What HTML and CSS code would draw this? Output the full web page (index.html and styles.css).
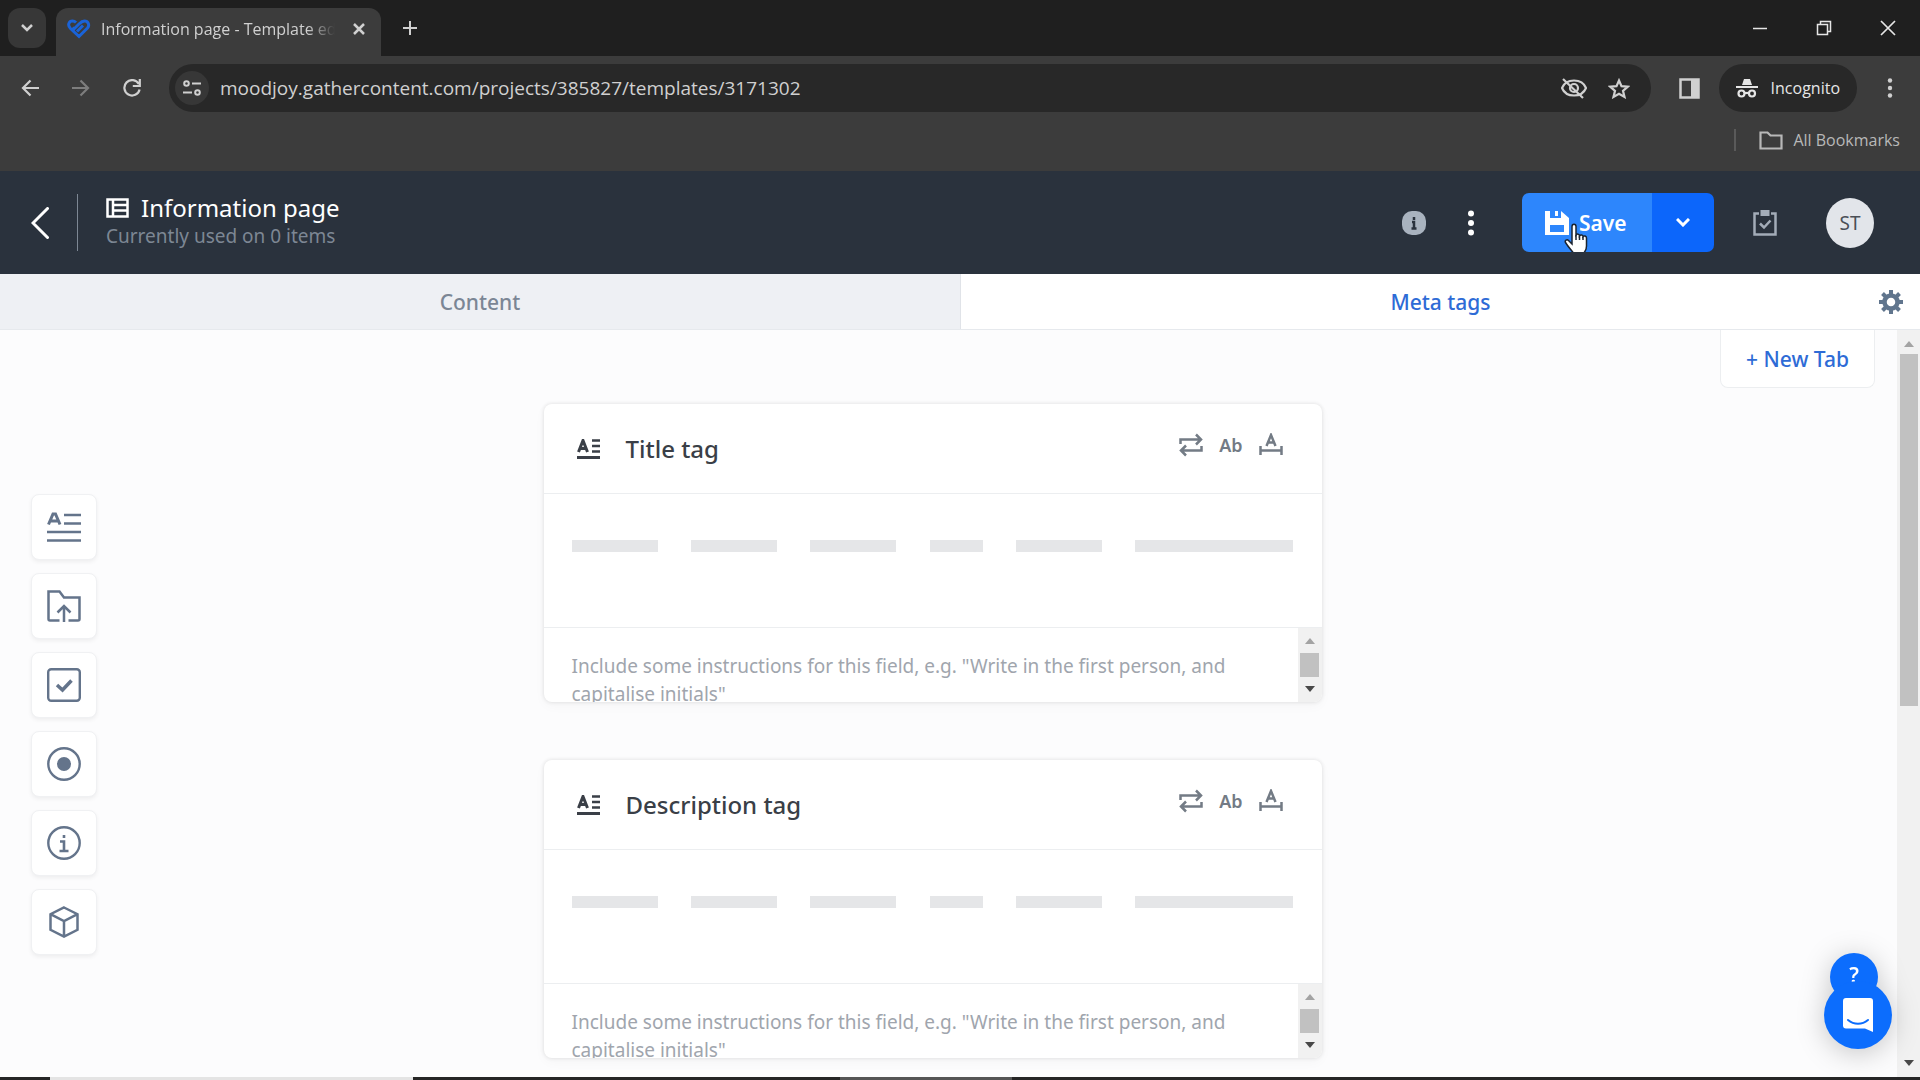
FILE: index.html
```html
<!DOCTYPE html>
<html lang="en">
<head>
<meta charset="utf-8">
<title>Information page - Template editor</title>
<link rel="stylesheet" href="styles.css">
</head>
<body>
<svg class="defs" aria-hidden="true">
  <symbol id="i-text" viewBox="0 0 23 20"><path d="M0 18.500h23" stroke="currentColor" stroke-width="3"/><path d="M15 1.500h8M15 7h8M15 12.500h8" stroke="currentColor" stroke-width="2.500"/><path d="M1.500 13L6 1.500L10.500 13M3 9.500h6" fill="none" stroke="currentColor" stroke-width="3"/></symbol>
  <symbol id="i-swap" viewBox="0 0 24 24"><path d="M1.500 11V6.500H22M17 1.500l5 5-5 5M22.500 13v4.500H2M7 12.500l-5 5 5 5" fill="none" stroke="currentColor" stroke-width="2.500"/></symbol>
  <symbol id="i-limit" viewBox="0 0 24 24"><path d="M1.500 13v9M22.500 13v9M1.500 17.500h21M7.500 13L12 2l4.500 11M9 9.500h6" fill="none" stroke="currentColor" stroke-width="2.500"/></symbol>
  <symbol id="i-up" viewBox="0 0 10 6"><path d="M0 6L5 0l5 6z" fill="currentColor"/></symbol>
  <symbol id="i-down" viewBox="0 0 10 6"><path d="M0 0h10L5 6z" fill="currentColor"/></symbol>
</svg>

<div class="browser">
  <div class="tabstrip">
    <button class="tab-search" aria-label="Search tabs"><svg width="12" height="8" viewBox="0 0 12 8"><path d="M1 1l5 5 5-5" fill="none" stroke="currentColor" stroke-width="2.500"/></svg></button>
    <div class="browser-tab">
      <svg class="favicon" width="24" height="20" viewBox="0 0 24 20"><path d="M10 12.500l6-6M5.500 8.500l1.500 1.500 5-5c2-2 3.500-3 5.500-3 3.500 0 5.500 4 3 7l-8.500 8.500L3.500 9.500C0 6 2 2 5.500 2c1.500 0 2.500.500 3.500 1.500" fill="none" stroke="currentColor" stroke-width="3"/></svg>
      <span class="tab-title">Information page - Template editor</span>
      <button class="plain" aria-label="Close tab"><svg width="12" height="12" viewBox="0 0 12 12"><path d="M1 1l10 10M11 1L1 11" stroke="currentColor" stroke-width="2.500"/></svg></button>
    </div>
    <button class="plain new-browser-tab" aria-label="New tab"><svg width="16" height="16" viewBox="0 0 16 16"><path d="M8 1v14M1 8h14" stroke="currentColor" stroke-width="2"/></svg></button>
    <div class="window-buttons">
      <button class="plain" aria-label="Minimize"><svg width="16" height="16" viewBox="0 0 16 16"><path d="M1 8.500h14" stroke="currentColor" stroke-width="1.500"/></svg></button>
      <button class="plain" aria-label="Restore"><svg width="16" height="16" viewBox="0 0 16 16"><path d="M1.500 4.500h10v10h-10zM4.500 4V1.500h10v10H12" fill="none" stroke="currentColor" stroke-width="1.500"/></svg></button>
      <button class="plain" aria-label="Close"><svg width="16" height="16" viewBox="0 0 16 16"><path d="M1 1l14 14M15 1L1 15" stroke="currentColor" stroke-width="1.700"/></svg></button>
    </div>
  </div>
  <div class="toolbar">
    <div class="nav-buttons">
      <button class="plain" aria-label="Back"><svg width="18" height="18" viewBox="0 0 18 18"><path d="M18 9H2M9.500 1.500L2 9l7.500 7.500" fill="none" stroke="currentColor" stroke-width="2.200"/></svg></button>
      <button class="plain dim" aria-label="Forward"><svg width="18" height="18" viewBox="0 0 18 18"><path d="M0 9h16M8.500 1.500L16 9l-7.500 7.500" fill="none" stroke="currentColor" stroke-width="2.200"/></svg></button>
      <button class="plain" aria-label="Reload"><svg width="18" height="18" viewBox="0 0 18 18"><path d="M15.800 5A7.700 7.700 0 1 0 16.600 10.500M16.800 0v7h-7" fill="none" stroke="currentColor" stroke-width="2.200"/></svg></button>
    </div>
    <div class="address">
      <button class="site-info" aria-label="Site information"><svg width="18" height="16" viewBox="0 0 18 16"><g fill="none" stroke="currentColor" stroke-width="2"><circle cx="3.500" cy="3.500" r="2.300"/><path d="M9 3.500h9M0 12.500h9"/><circle cx="14.500" cy="12.500" r="2.300"/></g></svg></button>
      <input class="url" aria-label="Address" value="moodjoy.gathercontent.com/projects/385827/templates/3171302">
      <button class="plain" aria-label="Tracking protection"><svg width="26" height="22" viewBox="0 0 26 22"><path d="M1 11C5 1 21 1 25 11C21 21 5 21 1 11z" fill="none" stroke="currentColor" stroke-width="2.200"/><circle cx="13" cy="11" r="4" fill="none" stroke="currentColor" stroke-width="2.200"/><path d="M2 2l20 19" stroke="currentColor" stroke-width="2.200"/></svg></button>
      <button class="plain" aria-label="Bookmark this page"><svg width="22" height="21" viewBox="0 0 22 21"><path d="M11 2.500l2.500 5.700 6.200.5-4.700 4.100 1.500 6.100L11 15.700l-5.500 3.200L7 12.800 2.300 8.700l6.200-.5z" fill="none" stroke="currentColor" stroke-width="2.200"/></svg></button>
    </div>
    <button class="plain side-panel" aria-label="Side panel"><svg width="21" height="21" viewBox="0 0 21 21"><path d="M1.500 1.500h18v18h-18z" fill="none" stroke="currentColor" stroke-width="2.500"/><path d="M12 1h8v19h-8z" fill="currentColor"/></svg></button>
    <button class="incognito"><svg width="22" height="20" viewBox="0 0 22 20"><path d="M6 7L8 1h6l2 6z" fill="currentColor"/><path d="M0 9h22" stroke="currentColor" stroke-width="2"/><g fill="none" stroke="currentColor" stroke-width="2.200"><circle cx="5.500" cy="15.500" r="3"/><circle cx="16" cy="15.500" r="3"/><path d="M8.500 15h4.500"/></g></svg>Incognito</button>
    <button class="plain" aria-label="Browser menu"><svg width="6" height="20" viewBox="0 0 6 20"><g fill="currentColor"><circle cx="3" cy="2.500" r="2.200"/><circle cx="3" cy="10" r="2.200"/><circle cx="3" cy="17.500" r="2.200"/></g></svg></button>
  </div>
  <div class="bookmarks">
    <span class="bookmark-rule"></span>
    <button class="plain bookmark-folder"><svg width="24" height="19" viewBox="0 0 24 19"><path d="M1.500 17.500v-16h7l3 3h11v13z" fill="none" stroke="currentColor" stroke-width="2.200"/></svg>All Bookmarks</button>
  </div>
</div>

<header class="app-header">
  <a class="back" href="#" aria-label="Back to templates"><svg width="18" height="32" viewBox="0 0 18 32"><path d="M16.500 1.500L2 16l14.500 14.500" fill="none" stroke="currentColor" stroke-width="3" stroke-linecap="round"/></svg></a>
  <div class="heading">
    <h1><svg width="23" height="20" viewBox="0 0 23 20"><path d="M1.500 1.500h20v17h-20zM7 1v18M7 7h14M7 12.500h14" fill="none" stroke="currentColor" stroke-width="2.500"/></svg>Information page</h1>
    <p>Currently used on 0 items</p>
  </div>
  <button class="plain info" aria-label="Information"><svg width="24" height="24" viewBox="0 0 24 24"><rect width="24" height="24" rx="10" fill="#a9b3bf"/><path d="M12 6v3M10 11h2v6M9.500 17.500h5" fill="none" stroke="#2a323d" stroke-width="2.500"/></svg></button>
  <button class="plain more" aria-label="More options"><svg width="6" height="26" viewBox="0 0 6 26"><g fill="currentColor"><circle cx="3" cy="3.500" r="3"/><circle cx="3" cy="13" r="3"/><circle cx="3" cy="22.500" r="3"/></g></svg></button>
  <div class="save-group">
    <button class="save"><svg width="24" height="24" viewBox="0 0 24 24"><path d="M0 0h5v7h11V0l8 7v17H0zM5 14v7h14v-7z" fill="currentColor" fill-rule="evenodd"/><path d="M10 0h3v5h-3z" fill="currentColor"/></svg>Save</button>
    <button class="save-more" aria-label="More save options"><svg width="14" height="9" viewBox="0 0 14 9"><path d="M1 1l6 6 6-6" fill="none" stroke="currentColor" stroke-width="3"/></svg></button>
    <svg class="pointer" width="26" height="34" viewBox="0 0 26 34"><path d="M8 3.500c0-3 4-3 4 0V12c1-1.500 3.500-1 3.500.8 1-1.500 3.500-1 3.500.8 1-1.200 3.500-.8 3.500 1.400V23c0 3-1 5-2 6v3.500H9.500V30C7 27 4 23.500 1.500 19.500c-1-2 1.500-3.500 3-2L8 21z" fill="#fff" stroke="#1b2430" stroke-width="1.500"/><path d="M12 12v5M15.500 13v4M19 14v3" stroke="#1b2430" stroke-width="1.500"/></svg>
  </div>
  <button class="plain tasks" aria-label="Tasks"><svg width="24" height="26" viewBox="0 0 24 26"><path d="M6 3.500H1.500v21h21v-21H18" fill="none" stroke="currentColor" stroke-width="2.500"/><path d="M7.500 0h9v6h-9z" fill="currentColor"/><path d="M7 13.500l4 4 6.500-7" fill="none" stroke="currentColor" stroke-width="2.500"/></svg></button>
  <button class="avatar">ST</button>
</header>

<nav class="tabs">
  <a class="tab" href="#">Content</a>
  <a class="tab active" href="#">Meta tags</a>
  <button class="plain settings" aria-label="Tab settings"><svg width="24" height="24" viewBox="0 0 24 24"><circle cx="12" cy="12" r="6.500" fill="none" stroke="currentColor" stroke-width="4.500"/><path d="M12 0v4M12 20v4M0 12h4M20 12h4M3.500 3.500l3 3M17.500 17.500l3 3M20.500 3.500l-3 3M6.500 17.500l-3 3" stroke="currentColor" stroke-width="4"/></svg></button>
</nav>

<div class="workspace">
  <aside class="palette">
    <button class="tool" aria-label="Text field"><svg width="34" height="30" viewBox="0 0 34 30"><path d="M1.500 12.500L6 2h2.500l4.500 10.500M3.500 9h7.500" fill="none" stroke="currentColor" stroke-width="3"/><path d="M17 3h17M17 11.500h17M0 20h34M0 28.500h34" stroke="currentColor" stroke-width="2.500"/></svg></button>
    <button class="tool" aria-label="Attachment field"><svg width="34" height="32" viewBox="0 0 34 32"><path d="M12.500 30.500H3c-1 0-1.500-.5-1.500-1.500V1.500h11l4.500 6h15.500V29c0 1-.5 1.500-1.500 1.500h-9.500M17 32V17M10.500 22.500l6.500-6.500 6.500 6.500" fill="none" stroke="currentColor" stroke-width="2.500"/></svg></button>
    <button class="tool" aria-label="Checkbox field"><svg width="34" height="34" viewBox="0 0 34 34"><rect x="1.200" y="1.200" width="31.600" height="31.600" rx="3" fill="none" stroke="currentColor" stroke-width="2.400"/><path d="M10 17l5.500 5L24.500 12.500" fill="none" stroke="currentColor" stroke-width="3.500"/></svg></button>
    <button class="tool" aria-label="Choice field"><svg width="34" height="34" viewBox="0 0 34 34"><circle cx="17" cy="17" r="15.700" fill="none" stroke="currentColor" stroke-width="2.400"/><circle cx="17" cy="17" r="7" fill="currentColor"/></svg></button>
    <button class="tool" aria-label="Guidelines"><svg width="34" height="34" viewBox="0 0 34 34"><circle cx="17" cy="17" r="15.700" fill="none" stroke="currentColor" stroke-width="2.400"/><path d="M17 9v3M13 15.500h4v9M12.500 25h9" fill="none" stroke="currentColor" stroke-width="2.600"/></svg></button>
    <button class="tool" aria-label="Component"><svg width="30" height="32" viewBox="0 0 30 32"><path d="M15 1.500l13.500 6.700v15.600L15 30.500 1.500 23.800V8.200zM1.500 8.200L15 15l13.500-6.800M15 15v15.500" fill="none" stroke="currentColor" stroke-width="2.500"/></svg></button>
  </aside>

  <main class="fields">
    <section class="card">
      <div class="card-head">
        <svg class="type" width="23" height="20"><use href="#i-text"/></svg>
        <h2 id="field-title">Title tag</h2>
        <div class="card-tools">
          <button class="plain" aria-label="Repeatable"><svg width="24" height="24"><use href="#i-swap"/></svg></button>
          <button class="plain ab">Ab</button>
          <button class="plain" aria-label="Character limit"><svg width="24" height="24"><use href="#i-limit"/></svg></button>
        </div>
      </div>
      <div class="skeleton"><i></i><i></i><i></i><i class="short"></i><i></i><i class="long"></i></div>
      <div class="instructions">
        <textarea aria-labelledby="field-title" placeholder='Include some instructions for this field, e.g. "Write in the first person, and capitalise initials"'></textarea>
        <div class="mini-scroll"><svg class="arrow-off" width="10" height="6"><use href="#i-up"/></svg><span class="thumb"></span><svg width="10" height="6"><use href="#i-down"/></svg></div>
      </div>
    </section>
    <section class="card">
      <div class="card-head">
        <svg class="type" width="23" height="20"><use href="#i-text"/></svg>
        <h2 id="field-description">Description tag</h2>
        <div class="card-tools">
          <button class="plain" aria-label="Repeatable"><svg width="24" height="24"><use href="#i-swap"/></svg></button>
          <button class="plain ab">Ab</button>
          <button class="plain" aria-label="Character limit"><svg width="24" height="24"><use href="#i-limit"/></svg></button>
        </div>
      </div>
      <div class="skeleton"><i></i><i></i><i></i><i class="short"></i><i></i><i class="long"></i></div>
      <div class="instructions">
        <textarea aria-labelledby="field-description" placeholder='Include some instructions for this field, e.g. "Write in the first person, and capitalise initials"'></textarea>
        <div class="mini-scroll"><svg class="arrow-off" width="10" height="6"><use href="#i-up"/></svg><span class="thumb"></span><svg width="10" height="6"><use href="#i-down"/></svg></div>
      </div>
    </section>
  </main>

  <div class="side">
    <button class="new-tab">+ New Tab</button>
    <div class="help-stack">
      <button class="help">?</button>
      <button class="chat" aria-label="Open chat"><svg width="30" height="34" viewBox="0 0 30 34"><path d="M3 0h24c2 0 3 1 3 3v31l-8-3.500H3c-2 0-3-1-3-3V3c0-2 1-3 3-3z" fill="#fff"/><path d="M5 22c6 5 14 5 20 0" fill="none" stroke="#0c6dfd" stroke-width="2" stroke-linecap="round"/></svg></button>
    </div>
  </div>

  <div class="page-scroll"><svg class="arrow-off" width="10" height="6"><use href="#i-up"/></svg><span class="thumb"></span><svg width="10" height="6"><use href="#i-down"/></svg></div>
</div>
<footer class="taskbar"><span class="task-open"></span><span class="task-idle"></span></footer>
</body>
</html>
```
FILE: styles.css
```css
*, *::before, *::after { box-sizing: border-box; }

body {
  margin: 0;
  height: 100vh;
  display: flex;
  flex-direction: column;
  overflow: hidden;
  background: #fcfcfd;
  color: #3a3f47;
  font-family: "Noto Sans", "Open Sans", sans-serif;
  font-size: 19px;
}

button, input, textarea { font: inherit; color: inherit; }
svg { display: block; flex: none; }
.defs { position: absolute; width: 0; height: 0; }
.plain { border: 0; padding: 0; background: none; display: flex; align-items: center; }

/* Browser window */
.browser { background: #3c3c3c; color: #d0d0d0; font-family: "Open Sans", sans-serif; font-size: 16px; }
.tabstrip { display: flex; align-items: center; height: 56px; padding: 8px 24px 0 8px; background: #1f1f1f; }
.tab-search { width: 38px; height: 40px; margin: 0 10px 8px 0; border: 0; border-radius: 12px; padding: 0; display: grid; place-items: center; background: #373737; }
.browser-tab { display: flex; align-items: center; width: 325px; height: 48px; padding: 2px 16px 8px 11px; border-radius: 12px 12px 0 0; background: #3c3c3c; }
.favicon { color: #1a63d8; }
.tab-title { flex: 1; min-width: 0; margin: 0 18px 0 10px; overflow: hidden; white-space: nowrap; line-height: 24px; -webkit-mask-image: linear-gradient(90deg, #000 88%, transparent); mask-image: linear-gradient(90deg, #000 88%, transparent); }
.new-browser-tab { margin: 0 auto 8px 21px; }
.window-buttons { display: flex; gap: 48px; margin-bottom: 8px; color: #e6e6e6; }
.toolbar { display: flex; align-items: center; height: 64px; padding: 0 27px 0 21px; border-radius: 0 12px 0 0; }
.nav-buttons { display: flex; gap: 33px; margin-right: 28px; }
.dim { color: #7d7d7d; }
.address { flex: 1; display: flex; align-items: center; gap: 21px; height: 48px; padding: 0 21px 0 6px; border-radius: 24px; background: #282828; }
.site-info { width: 34px; height: 34px; border: 0; border-radius: 50%; padding: 0; display: grid; place-items: center; background: #373737; }
.url { flex: 1; min-width: 0; margin-left: -10px; border: 0; padding: 0; background: none; font-size: 19px; outline: 0; }
.side-panel { margin: 0 19px 0 28px; }
.incognito { display: flex; align-items: center; gap: 13px; height: 48px; margin-right: 30px; border: 0; border-radius: 24px; padding: 0 17px; background: #282828; color: #e6e6e6; }
.bookmarks { display: flex; align-items: center; justify-content: flex-end; gap: 23px; height: 51px; padding: 0 20px 11px; }
.bookmark-rule { width: 2px; height: 22px; background: #5a5a5a; }
.bookmark-folder { gap: 10px; color: #b8b8b8; }

/* App header */
.app-header { display: flex; align-items: center; height: 103px; padding: 0 46px 0 31px; background: #2a323d; color: #fff; }
.back { display: flex; color: #fff; }
.heading { flex: 1; margin-left: 28px; padding-left: 28px; border-left: 1px solid #7d8794; height: 57px; }
.heading h1 { display: flex; align-items: center; gap: 12px; margin: 0; font-size: 24px; line-height: 28px; font-weight: 400; }
.heading p { margin: 0; line-height: 28px; color: #7d8794; }
.more { margin: 0 48px 0 42px; }
.save-group { position: relative; display: flex; height: 59px; border-radius: 7px; overflow: hidden; }
.save { display: flex; align-items: center; gap: 10px; width: 130px; border: 0; padding: 0 0 0 23px; background: #2d86fc; font-size: 21px; font-weight: 600; color: #fff; }
.save-more { width: 62px; border: 0; padding: 0; display: grid; place-items: center; background: #0c66fb; color: #fff; }
.pointer { position: absolute; left: 42px; top: 30px; }
.tasks { margin: 0 49px 0 39px; color: #a3acb8; }
.avatar { width: 48px; height: 50px; border: 0; border-radius: 50%; padding: 0; background: #e2e5ea; color: #4a4f57; }

/* Tabs */
.tabs { position: relative; display: grid; grid-template-columns: 1fr 1fr; height: 56px; border-bottom: 1px solid #e6e9ed; font-size: 21px; font-weight: 500; }
.tab { display: grid; place-items: center; background: #eef0f4; color: #7b8695; text-decoration: none; }
.tab.active { background: #fff; border-left: 1px solid #e0e3e8; color: #2e6bd6; }
.settings { position: absolute; right: 17px; top: 16px; color: #60758d; }

/* Workspace */
.workspace { flex: 1; min-height: 0; display: grid; grid-template-columns: 128px 1fr 160px 23px; grid-template-rows: minmax(0, 1fr); overflow: hidden; }
.palette { align-self: center; display: flex; flex-direction: column; gap: 13px; padding: 42px 0 0 31px; color: #64748b; }
.tool { width: 66px; height: 66px; border: 1px solid #f0f1f3; border-radius: 8px; padding: 0; display: grid; place-items: center; background: #fff; box-shadow: 0 2px 4px #0000000f; }
.fields { width: 100%; max-width: 778px; margin: 0 auto; padding-top: 74px; }
.card { margin-bottom: 58px; border-radius: 8px; background: #fff; box-shadow: 0 0 4px #0000001f, 0 4px 12px #00000008; overflow: hidden; }
.card-head { display: flex; align-items: center; height: 90px; padding: 0 39px 0 33px; border-bottom: 1px solid #eceef0; }
.card-head h2 { flex: 1; margin: 0 0 0 26px; font-size: 24px; font-weight: 500; line-height: 32px; }
.card-tools { display: flex; align-items: center; gap: 16px; margin-bottom: 8px; color: #737b85; }
.ab { font-size: 18px; font-weight: 600; }
.skeleton { display: flex; justify-content: space-between; height: 134px; padding: 46px 28px 0; border-bottom: 1px solid #eceef0; }
.skeleton i { width: 86px; height: 12px; background: #e5e6e8; }
.skeleton .short { width: 53px; }
.skeleton .long { width: 158px; }
.instructions { display: flex; height: 74px; }
.instructions textarea { flex: 1; border: 0; padding: 24px 28px 0; resize: none; overflow: hidden; background: none; line-height: 28px; outline: 0; }
.instructions textarea::placeholder { color: #a0a5ad; opacity: 1; }
.mini-scroll, .page-scroll { display: flex; flex-direction: column; align-items: center; background: #f1f1f1; color: #484848; }
.mini-scroll { width: 24px; padding: 10px 0; justify-content: space-between; }
.thumb { background: #c1c1c1; }
.mini-scroll .thumb { width: 19px; height: 24px; }
.arrow-off { color: #a3a3a3; }

/* Right column */
.side { display: flex; flex-direction: column; justify-content: space-between; align-items: flex-end; }
.new-tab { width: 155px; height: 58px; margin-right: 22px; border: 1px solid #eceef0; border-top: 0; border-radius: 0 0 8px 8px; background: #fff; font-size: 21px; font-weight: 500; color: #2e6bd6; }
.help-stack { display: flex; flex-direction: column; align-items: center; margin: 0 5px 28px 0; }
.help { width: 48px; height: 48px; margin: 0 8px -20px 0; border: 0; border-radius: 50%; padding: 0 0 4px; background: #0c6dfd; color: #fff; font-size: 21px; font-weight: 600; }
.chat { width: 68px; height: 68px; border: 0; border-radius: 50%; padding: 0; display: grid; place-items: center; background: #0c6dfd; }
.help-stack { filter: drop-shadow(0 4px 14px #00000038); }
.page-scroll { padding: 11px 0; }
.page-scroll .thumb { width: 18px; height: 352px; margin: 7px 0 auto; }

.taskbar { display: flex; height: 3px; padding-left: 50px; background: #262626; }
.task-open { width: 363px; background: #e4e4e4; }
.task-idle { width: 172px; margin-left: 427px; background: #555; }
```
